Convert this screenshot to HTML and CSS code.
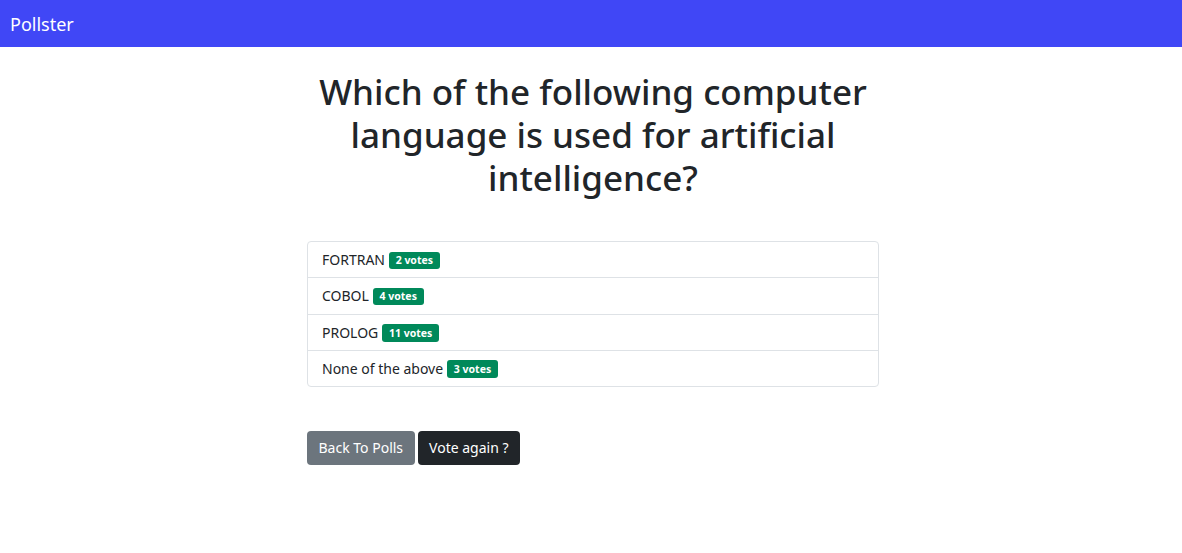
FILE: index.html
```html
<!DOCTYPE html>
<html lang="en">
<head>
<meta charset="utf-8">
<title>Pollster</title>
<link rel="stylesheet" href="styles.css">
</head>
<body>
<nav class="navbar">
  <a class="brand" href="#">Pollster</a>
</nav>
<main class="container">
  <h1 class="question">Which of the following computer language is used for artificial intelligence?</h1>
  <ul class="list-group">
    <li class="list-item">FORTRAN <span class="badge">2 votes</span></li>
    <li class="list-item">COBOL <span class="badge">4 votes</span></li>
    <li class="list-item">PROLOG <span class="badge">11 votes</span></li>
    <li class="list-item">None of the above <span class="badge">3 votes</span></li>
  </ul>
  <div class="actions">
    <a class="btn btn-secondary" href="#">Back To Polls</a>
    <a class="btn btn-dark" href="#">Vote again ?</a>
  </div>
</main>
</body>
</html>
```

FILE: styles.css
```css
* { box-sizing: border-box; }
html, body { margin: 0; padding: 0; }
body {
  font-family: "Noto Sans", "Open Sans", sans-serif;
  color: #212529;
  background: #fff;
  font-size: 16px;
  line-height: 1.5;
}
.navbar {
  height: 47px;
  background: #4047f6;
  display: flex;
  align-items: center;
  padding: 0 10px;
}
.brand {
  color: #fff;
  text-decoration: none;
  font-size: 18px;
  line-height: 1;
}
.container {
  box-sizing: content-box;
  width: 572px;
  padding-left: 4px;
  margin: 0 auto;
}
.question {
  margin: 23px 0 42px;
  font-size: 35px;
  font-weight: 500;
  line-height: 43px;
  text-align: center;
}
.list-group {
  list-style: none;
  margin: 0;
  padding: 0;
  border: 1px solid #dee2e6;
  border-radius: 4px;
}
.list-item {
  padding: 8px 14px;
  font-size: 14px;
  line-height: 19.25px;
  border-top: 1px solid #dee2e6;
}
.list-item:first-child { border-top: 0; }
.badge {
  display: inline-block;
  background: #00895a;
  color: #fff;
  font-size: 10.5px;
  font-weight: 700;
  line-height: 1;
  padding: 3.5px 7px;
  border-radius: 3px;
  vertical-align: 1px;
}
.actions {
  margin-top: 44px;
  display: flex;
  gap: 3px;
}
.btn {
  display: inline-block;
  font-size: 14px;
  line-height: 20px;
  padding: 7px 11.5px;
  border-radius: 4px;
  color: #fff;
  text-decoration: none;
}
.btn-secondary { background: #6c757d; }
.btn-dark { background: #212529; }
```
